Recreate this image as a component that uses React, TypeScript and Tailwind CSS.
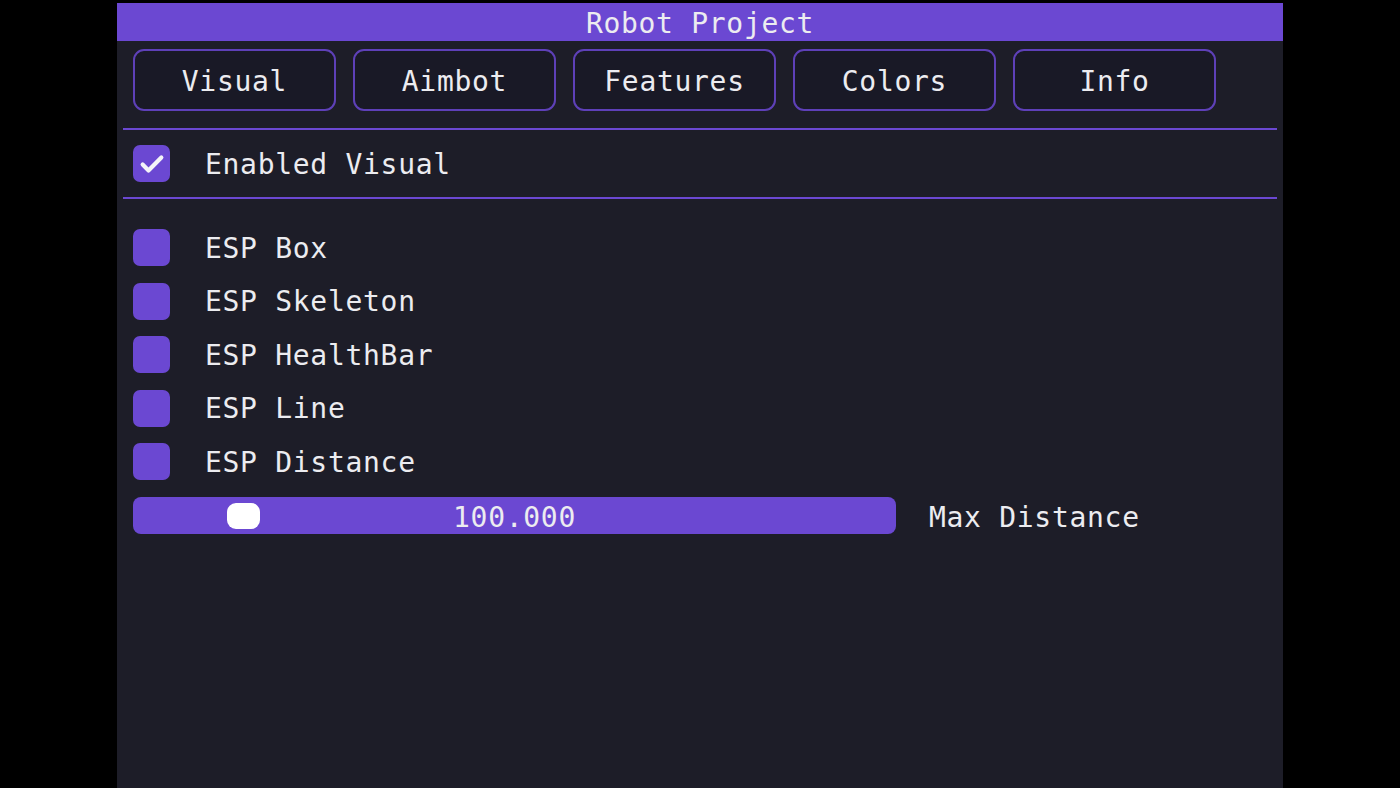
import { useState } from 'react';

const tabs = ['Visual', 'Aimbot', 'Features', 'Colors', 'Info'];
const esp = ['ESP Box', 'ESP Skeleton', 'ESP HealthBar', 'ESP Line', 'ESP Distance'];

function Check({ checked }: { checked?: boolean }) {
  return (
    <div className="flex h-[37px] w-[37px] shrink-0 items-center justify-center rounded-[7px] bg-[#6b48d2]">
      {checked ? (
        <svg width="28" height="28" viewBox="0 0 24 24" fill="none">
          <path d="M4 12.5l5 5L20 6.5" stroke="#f4f4f8" strokeWidth="3.6" strokeLinecap="round" strokeLinejoin="round" />
        </svg>
      ) : null}
    </div>
  );
}

function Row({ label, checked }: { label: string; checked?: boolean }) {
  return (
    <div className="flex h-[37px] items-center gap-[35px]">
      <Check checked={checked} />
      <span className="pt-[2px]">{label}</span>
    </div>
  );
}

export default function App() {
  const [tab] = useState('Visual');
  return (
    <div
      className="flex h-[788px] w-[1400px] justify-center overflow-hidden bg-black pt-[3px] text-[28px] leading-none tracking-[0.7px] text-[#ececf0]"
      style={{ fontFamily: '"DejaVu Sans Mono", "Liberation Mono", monospace' }}
    >
      <div className="flex w-[1166px] flex-col bg-[#1d1d28]">
        <div className="flex h-[38px] items-center justify-center bg-[#6b48d2] pt-[3px]">Robot Project</div>

        <div className="flex gap-[17px] pl-4 pt-2">
          {tabs.map((t) => (
            <div
              key={t}
              className={`flex h-[62px] w-[203px] items-center justify-center rounded-[11px] border-2 border-[#5e40b8] pt-[3px] ${
                t === tab ? 'bg-[#191926]' : 'bg-[#191926]'
              }`}
            >
              {t}
            </div>
          ))}
        </div>

        <div className="mx-[6px] mt-[17px] h-[2px] bg-[#6b48d2]" />

        <div className="ml-4 mt-[15px]">
          <Row label="Enabled Visual" checked />
        </div>

        <div className="mx-[6px] mt-[15px] h-[2px] bg-[#6b48d2]" />

        <div className="ml-4 mt-[30px] flex flex-col gap-[16.5px]">
          {esp.map((e) => (
            <Row key={e} label={e} />
          ))}

          <div className="flex h-[37px] items-center gap-[33px]">
            <div className="relative flex h-[37px] w-[763px] items-center justify-center rounded-[8px] bg-[#6b48d2] pt-[5px]">
              <div className="absolute left-[94px] top-[6px] h-[26px] w-[33px] rounded-[9px] bg-white" />
              <span>100.000</span>
            </div>
            <span className="pt-[5px]">Max Distance</span>
          </div>
        </div>
      </div>
    </div>
  );
}
